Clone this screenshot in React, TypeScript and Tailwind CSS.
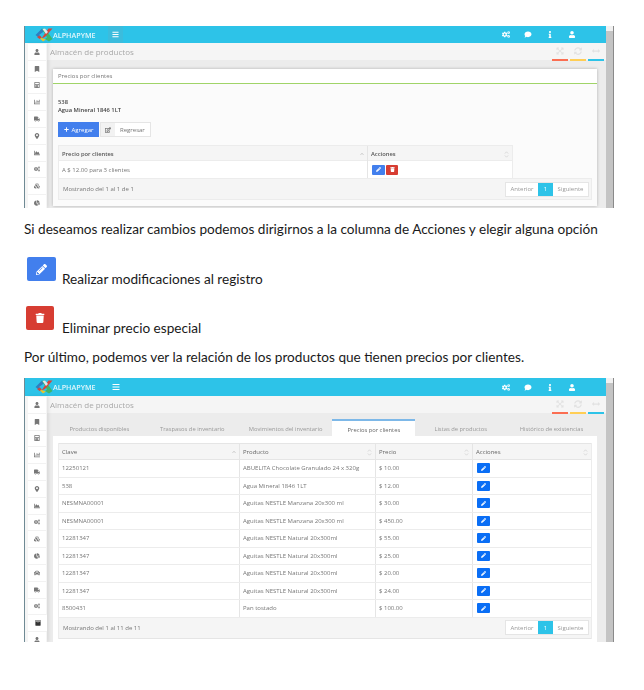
import React from "react";
import {
  FaArchive,
  FaArrowsAltH,
  FaBars,
  FaBookmark,
  FaCalculator,
  FaCar,
  FaChartArea,
  FaChartBar,
  FaChartPie,
  FaChevronUp,
  FaCogs,
  FaComment,
  FaCubes,
  FaExpandArrowsAlt,
  FaInfo,
  FaMapMarkerAlt,
  FaPencilAlt,
  FaPlus,
  FaRegEdit,
  FaSyncAlt,
  FaTrash,
  FaTruck,
  FaUser,
} from "react-icons/fa";

const firstSide = [FaUser, FaBookmark, FaCalculator, FaChartBar, FaTruck, FaMapMarkerAlt, FaChartArea, FaCogs, FaCubes, FaChartPie];
const secondSide = [FaUser, FaBookmark, FaCalculator, FaChartBar, FaTruck, FaMapMarkerAlt, FaChartArea, FaCogs, FaCubes, FaChartPie, FaCar, FaTruck, FaCogs, FaArchive, FaUser];

const products = [
  ["12250121", "ABUELITA Chocolate Granulado 24 x 320g", "$ 10.00"],
  ["538", "Agua Mineral 1846 1LT", "$ 12.00"],
  ["NESMNA00001", "Aguitas NESTLE Manzana 20x300 ml", "$ 30.00"],
  ["NESMNA00001", "Aguitas NESTLE Manzana 20x300 ml", "$ 450.00"],
  ["12281347", "Aguitas NESTLE Natural 20x300ml", "$ 55.00"],
  ["12281347", "Aguitas NESTLE Natural 20x300ml", "$ 25.00"],
  ["12281347", "Aguitas NESTLE Natural 20x300ml", "$ 20.00"],
  ["12281347", "Aguitas NESTLE Natural 20x300ml", "$ 24.00"],
  ["8500431", "Pan tostado", "$ 100.00"],
];

const tabs = [
  { label: "Productos disponibles", width: "w-[93px]" },
  { label: "Traspasos de inventario", width: "w-[93px]" },
  { label: "Movimientos del inventario", width: "w-[94px]" },
  { label: "Precios por clientes", width: "w-[83px]" },
  { label: "Listas de productos", width: "w-[91px]" },
  { label: "Histórico de existencias", width: "w-[91px]" },
];

function Logo() {
  return (
    <svg width="18" height="14" viewBox="0 0 18 14" className="shrink-0">
      <path d="M7 0.5 L9.5 3 L4 7 L7 9.5 L5.5 11 L0.5 7 Z" fill="#2f7fc0" />
      <path d="M4 8 L5.5 11 L8 13.5 L11 11.5 L8 10.5 Z" fill="#e5c62e" />
      <path d="M2 9 L5 7.5 L6.5 9.5 L4.5 11 Z" fill="#d8443a" />
      <path d="M7 1 L10 0.5 L17.5 11 L14 13.5 L10 11 L12 9.5 Z" fill="#3fb56a" />
      <path d="M13.5 0.5 L17.5 0.5 L10 9 L6.5 10.5 Z" fill="#d8443a" />
      <path d="M7.5 1 L10 0.5 L13 4 L11 6 Z" fill="#dfe9ee" />
    </svg>
  );
}

function Navbar({ tall, boxed }: { tall?: boolean; boxed?: boolean }) {
  return (
    <div className={`flex items-center bg-[#2dc3e8] pl-[10px] pr-[30px] ${tall ? "h-[18px]" : "h-[17px]"}`}>
      <Logo />
      <span className="w-[44px] text-[7.2px] font-semibold text-white/85">ALPHAPYME</span>
      <div className={`ml-[11px] flex h-full w-[15px] items-center justify-center text-white ${boxed ? "bg-[#3bbcdd]" : ""}`}>
        <FaBars className={boxed ? "text-[7px]" : "text-[8px]"} />
      </div>
      <div className="ml-auto flex items-center gap-[14px] text-[7px] text-white">
        <FaCogs className="w-[8px]" />
        <FaComment className="w-[8px]" />
        <FaInfo className="w-[8px]" />
        <FaUser className="w-[8px]" />
      </div>
    </div>
  );
}

function PageTitle({ tall }: { tall?: boolean }) {
  return (
    <div className={`flex shrink-0 items-center justify-between bg-[#f5f5f5] pl-[3px] pr-[2px] ${tall ? "h-[18px]" : "h-[17px]"}`}>
      <span className="text-[8px] text-[#a9a9a9]">Almacén de productos</span>
      <div className="flex gap-[2px] self-end">
        <Tool color="bg-[#fb6e52]"><FaExpandArrowsAlt /></Tool>
        <Tool color="bg-[#ffce55]"><FaSyncAlt /></Tool>
        <Tool color="bg-[#2dc3e8]"><FaArrowsAltH /></Tool>
      </div>
    </div>
  );
}

function Tool({ color, children }: { color: string; children: React.ReactNode }) {
  return (
    <div className="flex w-[16px] flex-col items-center text-[8px] text-[#e2e2e2]">
      {children}
      <div className={`mt-[3px] h-[2px] w-full translate-y-px ${color}`} />
    </div>
  );
}

function Sidebar({ items, active }: { items: typeof firstSide; active?: number }) {
  return (
    <div className="relative w-[22px] shrink-0 overflow-hidden bg-[#f5f5f5] pl-[3px] pr-[1px] pt-px shadow-[2px_0_3px_rgba(0,0,0,0.08)]">
      {items.map((Icon, i) => (
        <div
          key={i}
          className={`flex h-[16.8px] items-center justify-center border-b border-[#f2f2f2] text-[6px] ${
            i === active ? "-mr-[2px] bg-white text-[#333]" : "bg-white text-[#777]"
          }`}
        >
          <Icon />
        </div>
      ))}
    </div>
  );
}

function Scrollbar() {
  return (
    <div className="flex w-[8px] shrink-0 flex-col border-r border-[#8a8a8a] bg-[#c4c4c4]">
      <div className="h-[5px] bg-[#f1f1f1]" />
    </div>
  );
}

function SortIcon({ up }: { up?: boolean }) {
  return up ? (
    <FaChevronUp className="text-[4px] text-[#c4c4c4]" />
  ) : (
    <svg width="5" height="7" viewBox="0 0 5 7" fill="none" stroke="#d4d4d4" strokeWidth="0.8">
      <path d="M0.8 2.6 L2.5 0.8 L4.2 2.6" />
      <path d="M0.8 4.4 L2.5 6.2 L4.2 4.4" />
    </svg>
  );
}

function Pager() {
  return (
    <div className="flex h-[15px] border border-[#e5e5e5] bg-white text-[6px] text-[#999]">
      <span className="flex w-[32px] items-center justify-center">Anterior</span>
      <span className="flex w-[15px] items-center justify-center bg-[#2dc3e8] text-white">1</span>
      <span className="flex w-[35px] items-center justify-center">Siguiente</span>
    </div>
  );
}

function DetailShot() {
  return (
    <div className="flex h-[182px] w-[590px] overflow-hidden border-l border-[#6f8a94] font-['Open_Sans',sans-serif] blur-[0.3px]">
      <div className="flex min-w-0 flex-1 flex-col">
        <Navbar boxed />
        <div className="flex min-h-0 flex-1">
          <Sidebar items={firstSide} />
          <div className="flex min-w-0 flex-1 flex-col bg-[#ececec]">
            <PageTitle />
            <div className="ml-[6px] mr-[9px] mt-[9px] h-[137px] bg-[#fbfbfb] shadow-[0_0_3px_rgba(0,0,0,0.25)]">
              <div className="flex h-[15px] items-center border-b-[1px] border-[#a0d468] bg-white pl-[5px] text-[6px] text-[#777]">
                Precios por clientes
              </div>
              <div className="px-[5px] pt-[14px]">
                <p className="text-[5.8px] font-semibold leading-[8px] text-[#444]">538</p>
                <p className="text-[5.8px] font-semibold leading-[9px] text-[#444]">Agua Mineral 1846 1LT</p>
                <div className="mt-[7px] flex gap-px">
                  <button className="flex h-[15px] w-[41px] items-center justify-center gap-[3px] bg-[#427fed] text-[6px] text-white">
                    <FaPlus className="text-[5px]" />
                    Agregar
                  </button>
                  <button className="flex h-[15px] items-center border border-[#e5e5e5] bg-white text-[6px] text-[#777]">
                    <span className="flex h-full w-[14px] items-center justify-center bg-[#f2f2f2] text-[#444]">
                      <FaRegEdit className="text-[6px]" />
                    </span>
                    <span className="px-[5px]">Regresar</span>
                  </button>
                </div>
                <div className="mt-[8px] w-[455px] border-x border-[#ececec] text-[6px]">
                  <div className="grid h-[16px] grid-cols-[309px_1fr] border-y border-[#ececec] bg-[#f5f5f5] text-[5.8px] font-semibold text-[#555]">
                    <div className="flex items-center justify-between border-r border-[#e5e5e5] pl-[3px] pr-[3px]">
                      Precio por clientes <SortIcon up />
                    </div>
                    <div className="flex items-center justify-between pl-[3px] pr-[3px]">
                      Acciones <SortIcon />
                    </div>
                  </div>
                  <div className="grid h-[17px] grid-cols-[309px_1fr] bg-white text-[#777]">
                    <div className="flex items-center border-r border-[#e5e5e5] pl-[3px]">A $ 12.00 para 3 clientes</div>
                    <div className="flex items-center gap-px pl-[4px]">
                      <span className="flex h-[10px] w-[13px] items-center justify-center rounded-[1px] bg-[#427fed] text-[5px] text-white">
                        <FaPencilAlt />
                      </span>
                      <span className="flex h-[10px] w-[12px] items-center justify-center rounded-[1px] bg-[#d73d32] text-[5px] text-white">
                        <FaTrash />
                      </span>
                    </div>
                  </div>
                </div>
                <div className="flex h-[22px] items-center justify-between border border-[#ececec] bg-[#f5f5f5] pl-[4px] pr-[2px] text-[6px] text-[#777]">
                  Mostrando del 1 al 1 de 1
                  <Pager />
                </div>
              </div>
            </div>
          </div>
        </div>
      </div>
      <Scrollbar />
    </div>
  );
}

function ListShot() {
  return (
    <div className="flex h-[264px] w-[590px] overflow-hidden border-l border-[#6f8a94] font-['Open_Sans',sans-serif] blur-[0.3px]">
      <div className="flex min-w-0 flex-1 flex-col">
        <Navbar tall />
        <div className="flex min-h-0 flex-1">
          <Sidebar items={secondSide} active={13} />
          <div className="flex min-w-0 flex-1 flex-col bg-[#ececec]">
            <PageTitle />
            <div className="ml-[6px] mr-[9px] mt-[6px] flex h-[17px] text-[5.8px] text-[#999]">
              {tabs.map((tab, i) => (
                <div
                  key={tab.label}
                  className={`flex items-center justify-center pt-[3px] ${tab.width} ${
                    i === 3 ? "border-t-2 border-[#7db8e8] bg-white text-[#666]" : ""
                  }`}
                >
                  {tab.label}
                </div>
              ))}
            </div>
            <div className="ml-[6px] mr-[9px] flex-1 bg-white px-[5px] pt-[7px]">
              <div className="border-x border-[#ececec] text-[6px] text-[#777]">
                <div className="grid h-[17px] grid-cols-[181px_136px_97px_1fr] border-y border-[#e5e5e5] bg-[#f5f5f5] text-[#666]">
                  {["Clave", "Producto", "Precio", "Acciones"].map((head, i) => (
                    <div key={head} className="flex items-center justify-between border-r border-[#e5e5e5] pl-[3px] pr-[3px] last:border-r-0">
                      {head} <SortIcon up={i === 0} />
                    </div>
                  ))}
                </div>
                {products.map((row, i) => (
                  <div key={i} className="grid h-[17.5px] grid-cols-[181px_136px_97px_1fr] border-b border-[#ececec]">
                    {row.map((cell, j) => (
                      <div key={j} className="flex items-center border-r border-[#e5e5e5] pl-[3px]">{cell}</div>
                    ))}
                    <div className="flex items-center pl-[4px]">
                      <span className="flex h-[10px] w-[13px] items-center justify-center rounded-[1px] bg-[#0a6ef5] text-[5px] text-white">
                        <FaPencilAlt />
                      </span>
                    </div>
                  </div>
                ))}
                <div className="flex h-[21px] items-center justify-between border-b border-[#e5e5e5] bg-[#f5f5f5] pl-[4px] pr-[2px]">
                  Mostrando del 1 al 11 de 11
                  <Pager />
                </div>
              </div>
            </div>
          </div>
        </div>
      </div>
      <Scrollbar />
    </div>
  );
}

export default function App() {
  return (
    <div className="h-[690px] w-[644px] overflow-hidden bg-white pl-[24px] pt-[26px] font-['Lato',sans-serif] text-[13.6px] leading-[16px] text-[#1a1a1a]">
      <DetailShot />
      <p className="mt-[13px]">Si deseamos realizar cambios podemos dirigirnos a la columna de Acciones y elegir alguna opción</p>
      <div className="ml-[3px] mt-[20px] flex items-end gap-[6px]">
        <span className="mb-[6px] flex h-[24px] w-[29px] items-center justify-center rounded-[2px] bg-[#427fed] text-[11px] text-white">
          <FaPencilAlt />
        </span>
        <span>Realizar modificaciones al registro</span>
      </div>
      <div className="ml-[2px] mt-[19px] flex items-end gap-[8px]">
        <span className="mb-[6px] flex h-[24px] w-[28px] items-center justify-center rounded-[2px] bg-[#d73d32] text-[10px] text-white">
          <FaTrash />
        </span>
        <span>Eliminar precio especial</span>
      </div>
      <p className="mt-[13px]">Por último, podemos ver la relación de los productos que tienen precios por clientes.</p>
      <div className="mt-[13px]">
        <ListShot />
      </div>
    </div>
  );
}
